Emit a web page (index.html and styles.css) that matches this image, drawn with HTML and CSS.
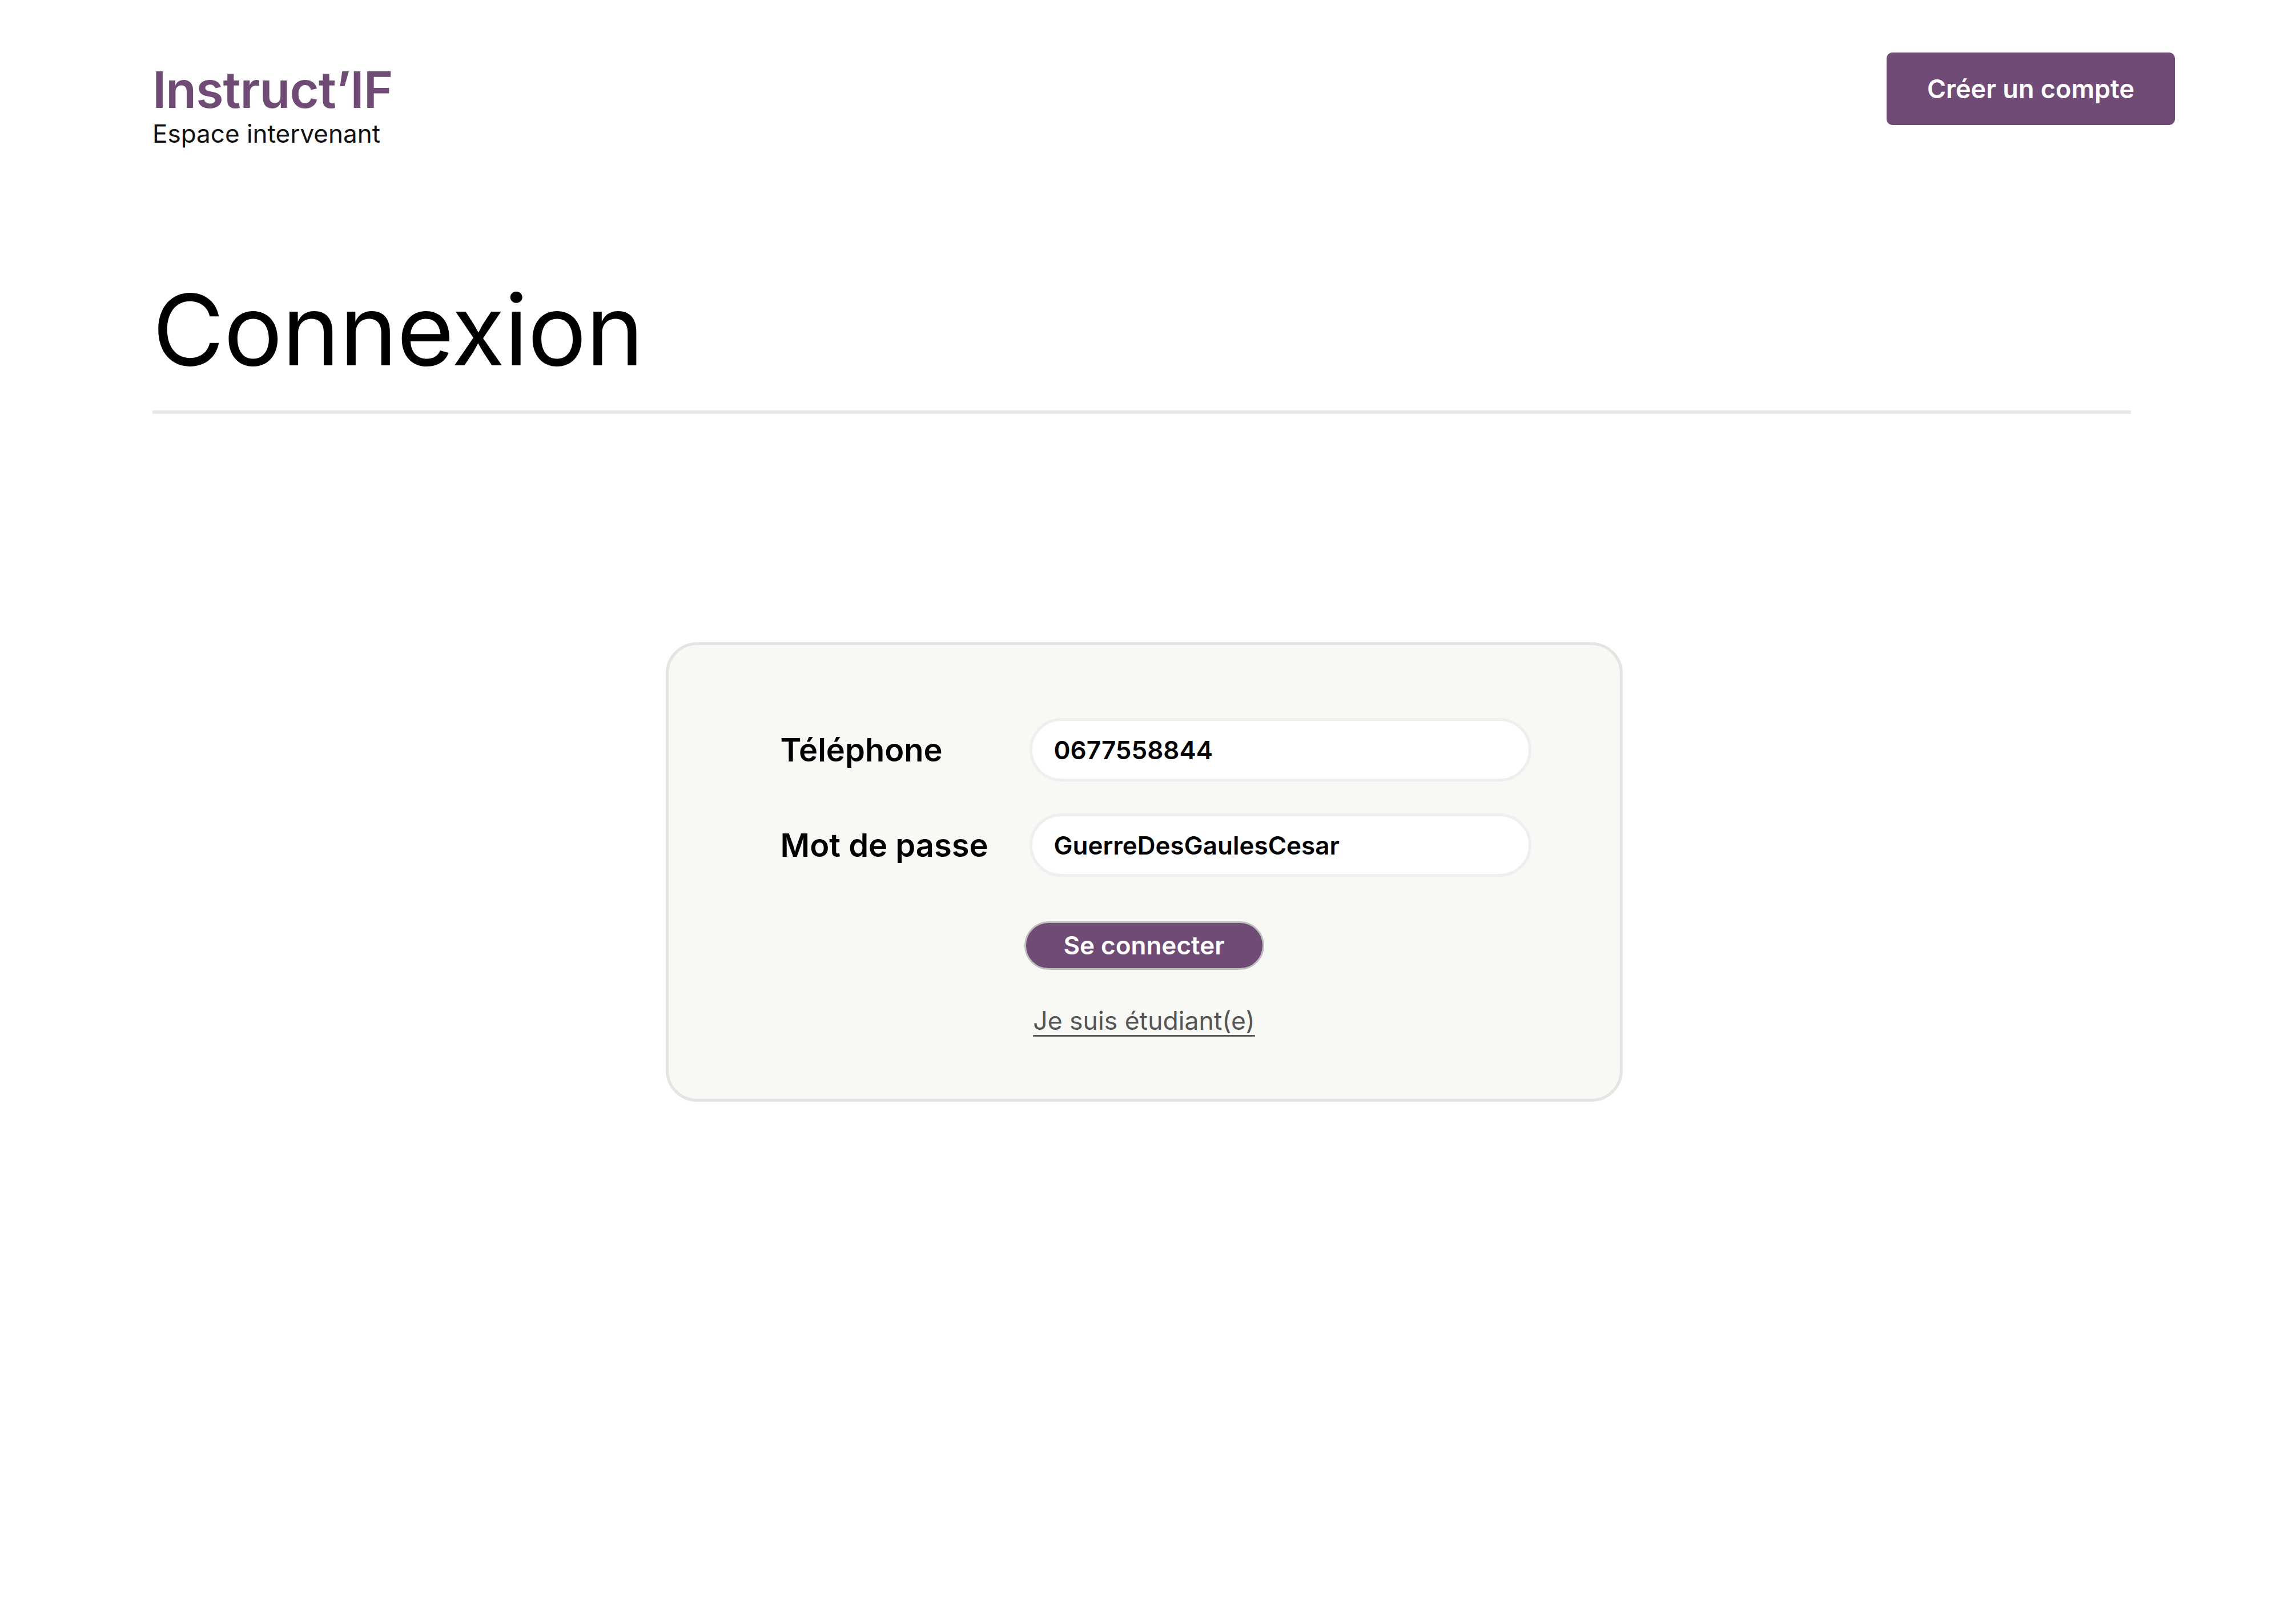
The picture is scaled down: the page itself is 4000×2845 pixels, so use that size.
FILE: index.html
```html
<!DOCTYPE html>
<html lang="fr">
<head>
<meta charset="utf-8">
<title>Instruct'IF – Connexion</title>
<link rel="stylesheet" href="styles.css">
</head>
<body>
<header class="topbar">
  <div class="brand">
    <div class="brand-name">Instruct’IF</div>
    <div class="brand-sub">Espace intervenant</div>
  </div>
  <a class="btn-account" href="#">Créer un compte</a>
</header>
<main class="page">
  <h1 class="title">Connexion</h1>
  <section class="card">
    <form class="form">
      <label class="label" for="tel">Téléphone</label>
      <input class="field" id="tel" type="text" value="0677558844">
      <label class="label" for="pwd">Mot de passe</label>
      <input class="field" id="pwd" type="text" value="GuerreDesGaulesCesar">
    </form>
    <div class="actions">
      <button class="btn-login" type="button">Se connecter</button>
      <a class="link" href="#">Je suis étudiant(e)</a>
    </div>
  </section>
</main>
</body>
</html>
```

FILE: styles.css
```css
* { box-sizing: border-box; }
html, body { margin: 0; padding: 0; background: #ffffff; }
body {
  font-family: Inter, "Noto Sans", "Liberation Sans", sans-serif;
  color: #000;
}
.topbar {
  display: flex;
  justify-content: space-between;
  align-items: flex-start;
  padding: 92px 191px 0 267px;
}
.brand { padding-top: 10px; }
.brand-name {
  font-size: 88px;
  line-height: 110px;
  font-weight: 600;
  color: #6f4b75;
  letter-spacing: -1px;
}
.brand-sub {
  font-size: 44px;
  line-height: 45px;
  font-weight: 400;
  color: #111;
}
.btn-account {
  display: block;
  width: 505px;
  height: 127px;
  line-height: 127px;
  text-align: center;
  background: #6f4b75;
  color: #fff;
  font-size: 45px;
  font-weight: 600;
  text-decoration: none;
  border-radius: 10px;
}
.page {
  margin: 0 268px 0 267px;
}
.title {
  margin: 193px 0 0 0;
  font-size: 172px;
  line-height: 211px;
  font-weight: 400;
  letter-spacing: -1px;
  padding-top: 22px;
  padding-bottom: 36px;
  border-bottom: 6px solid #e6e6e6;
}
.card {
  width: 1676px;
  margin: 400px auto 0 auto;
  background: #f8f8f5;
  border: 5px solid #e4e4e2;
  border-radius: 55px;
  padding: 128px 0 110px 0;
  position: relative;
  left: 4px;
}
.form {
  display: grid;
  grid-template-columns: 436px 879px;
  row-gap: 56px;
  align-items: center;
  padding-left: 196px;
}
.label {
  font-size: 56px;
  font-weight: 600;
  color: #000;
}
.field {
  height: 111px;
  width: 879px;
  border: 5px solid #efefef;
  border-radius: 56px;
  background: #fff;
  padding: 0 0 0 38px;
  font-family: Inter, "Noto Sans", "Liberation Sans", sans-serif;
  font-size: 44px;
  font-weight: 600;
  color: #000;
  outline: none;
}
.actions {
  display: flex;
  flex-direction: column;
  align-items: center;
  margin-top: 78px;
}
.btn-login {
  font-family: Inter, "Noto Sans", "Liberation Sans", sans-serif;
  font-size: 44px;
  font-weight: 600;
  line-height: 53px;
  color: #fff;
  background: #6f4b75;
  border: 3px solid #bdbdbd;
  border-radius: 43px;
  width: 420px;
  padding: 13px 0;
}
.link {
  margin-top: 63px;
  font-size: 44.5px;
  line-height: 53px;
  color: #555;
  text-decoration: underline;
  text-decoration-thickness: 3px;
  text-underline-offset: 9px;
}
```
